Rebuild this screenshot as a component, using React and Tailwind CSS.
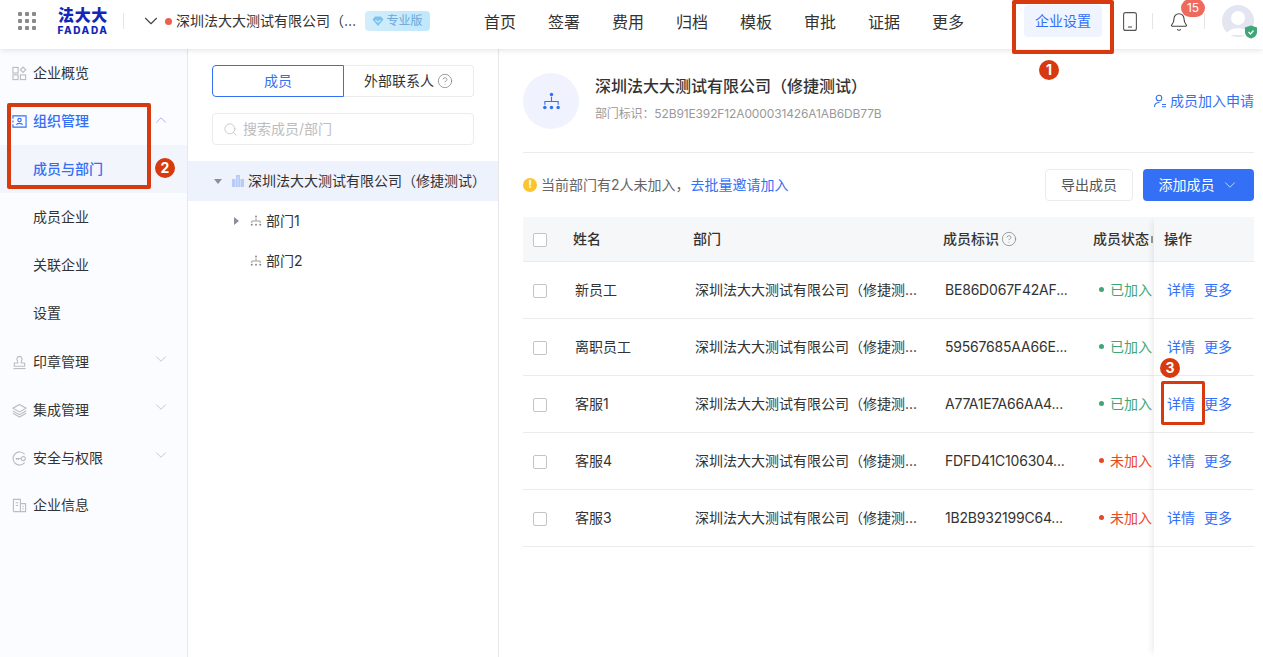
import React from 'react';
import { ChevronDown, ChevronUp, Search, CircleHelp, Bell } from 'lucide-react';

const navItems = ['首页', '签署', '费用', '归档', '模板', '审批', '证据', '更多'];

const members = [
	{ name: '新员工', id: 'BE86D067F42AF...', joined: true },
	{ name: '离职员工', id: '59567685AA66E...', joined: true },
	{ name: '客服1', id: 'A77A1E7A66AA4...', joined: true },
	{ name: '客服4', id: 'FDFD41C106304...', joined: false },
	{ name: '客服3', id: '1B2B932199C64...', joined: false },
];

const OrgIcon = ({ className, color = '#8c8c8c', r = 1, sw = 0.8 }) => (
	<svg viewBox="0 0 12 12" className={className} fill="none">
		<circle cx="6" cy="1.600" r={r} fill={color} />
		<path d="M6 3v3M1.800 8V6h8.400v2" stroke={color} strokeWidth={sw} />
		<circle cx="1.800" cy="9.800" r={r} fill={color} />
		<circle cx="6" cy="9.800" r={r} fill={color} />
		<circle cx="10.200" cy="9.800" r={r} fill={color} />
	</svg>
);

const SideItem = ({ icon, label, open, hasArrow, active, sub }) => (
	<div className={`h-12 flex items-center text-sm relative ${sub ? 'pl-[33px]' : 'pl-3'} ${active ? 'text-[#3370f6] font-medium' : 'text-[#333]'} ${sub && active ? 'bg-[#f3f5fd]' : ''}`}>
		{icon && <span className="w-[21px] h-4 flex items-center shrink-0">{icon}</span>}
		<span>{label}</span>
		{hasArrow && (open
			? <ChevronUp className="absolute left-[152px] top-[14px] w-[18px] h-[18px] text-[#7f9fe8]" strokeWidth={1} />
			: <ChevronDown className="absolute left-[152px] top-[12px] w-[18px] h-[18px] text-[#b5b5b5]" strokeWidth={1} />)}
	</div>
);

const gray = { stroke: '#bdbdbd', strokeWidth: 1.2, fill: 'none' };

const Sidebar = () => (
	<aside className="w-[188px] shrink-0 border-r border-[#e8e8e8] bg-[#fbfcff]">
		<SideItem label="企业概览" icon={
			<svg viewBox="0 0 16 16" className="w-[15px] h-[15px]">
				<rect x="1" y="1.500" width="5.500" height="6" {...gray} />
				<rect x="1" y="9.500" width="5.500" height="5" {...gray} />
				<rect x="9" y="9.500" width="5.500" height="5" {...gray} />
				<rect x="9.800" y="2" width="4" height="4" transform="rotate(45 11.800 4)" {...gray} />
			</svg>
		} />
		<SideItem label="组织管理" active hasArrow open icon={
			<svg viewBox="0 0 16 16" className="w-[15px] h-[15px]" fill="none" stroke="#3370f6" strokeWidth="1.200">
				<path d="M1 5V2h14v12H1v-3M1 7v2" />
				<circle cx="8" cy="6.500" r="1.800" />
				<path d="M4.800 11.500c.5-2 5.900-2 6.400 0" />
			</svg>
		} />
		<SideItem label="成员与部门" active sub />
		<SideItem label="成员企业" sub />
		<SideItem label="关联企业" sub />
		<SideItem label="设置" sub />
		<div className="h-px" />
		<SideItem label="印章管理" hasArrow icon={
			<svg viewBox="0 0 16 16" className="w-[15px] h-[15px]">
				<path d="M8 1.500a2.800 2.800 0 0 1 2.200 4.500L9.800 8.500H13.500V12H2.500V8.500H6.200L5.800 6A2.800 2.800 0 0 1 8 1.500z" {...gray} />
				<path d="M1.500 14.500h13" {...gray} />
			</svg>
		} />
		<SideItem label="集成管理" hasArrow icon={
			<svg viewBox="0 0 16 16" className="w-[15px] h-[15px]">
				<path d="M8 1.500 15 5.500 8 9.500 1 5.500z" {...gray} />
				<path d="M1 8.500l7 4 7-4M1 11l7 4 7-4" {...gray} />
			</svg>
		} />
		<SideItem label="安全与权限" hasArrow icon={
			<svg viewBox="0 0 16 16" className="w-[15px] h-[15px]">
				<path d="M13.500 3.500A7 7 0 1 0 13.500 12.500" {...gray} />
				<circle cx="12" cy="8" r="2.200" {...gray} />
				<path d="M4 8h5.500M5 8v1.500M7 8v1.500" {...gray} />
			</svg>
		} />
		<div className="-mt-px">
			<SideItem label="企业信息" icon={
				<svg viewBox="0 0 16 16" className="w-[15px] h-[15px]">
					<path d="M1.500 14.500V1.500h7.500v13M9 6h5.500v8.500H1.500" {...gray} />
					<path d="M4 5h2.500M4 8h2.500M11 9h1.500M11 11.500h1.500" {...gray} />
				</svg>
			} />
		</div>
	</aside>
);

const Header = () => (
	<header className="h-[49px] shrink-0 flex items-center pb-[7px] bg-white shadow-[0_1px_6px_rgba(0,0,0,0.12)] relative z-10 text-[#333]">
		<div className="ml-[18px] w-[18px] grid grid-cols-3 gap-[3px]">
			{Array.from({ length: 9 }).map((_, i) => <span key={i} className="w-1 h-1 bg-[#8a8a8a] rounded-[1px]" />)}
		</div>
		<div className="ml-[22px] w-[50px] flex flex-col items-center text-[#1226b8] leading-none">
			<span className="text-[16px] font-black leading-[15px] tracking-[0.6px]">法大大</span>
			<span className="text-[10px] font-extrabold leading-[9px] tracking-[1.6px] mt-[3px] whitespace-nowrap">FADADA</span>
		</div>
		<div className="ml-[15px] w-px h-4 bg-[#e5e5e5]" />
		<ChevronDown className="ml-[16px] w-[22px] h-[22px] text-[#444]" strokeWidth={1.200} />
		<span className="ml-[3px] w-[7px] h-[7px] rounded-full bg-[#ee5f50]" />
		<span className="ml-[4px] text-sm w-[182px] whitespace-nowrap">深圳法大大测试有限公司（…</span>
		<span className="ml-[7px] w-[65px] h-5 rounded bg-gradient-to-r from-[#d3edfb] to-[#bfe8fb] text-xs text-[#6ba6d6] flex items-center justify-center gap-[2px]">
			<svg viewBox="0 0 12 12" className="w-3 h-3"><path d="M3 1.500h6L11.500 4.500 6 11 .5 4.500z" fill="#7cc2ee" /><path d="M3.500 5 6 7.500 8.500 5" stroke="#fff" fill="none" /></svg>
			专业版
		</span>
		<nav className="ml-[54px] flex gap-8 text-base mt-[1px]">
			{navItems.map((n) => <span key={n}>{n}</span>)}
		</nav>
		<div className="ml-auto flex items-center pr-[9px]">
			<span className="w-[78px] h-8 rounded bg-[#f0f4ff] text-sm text-[#3370f6] flex items-center justify-center">企业设置</span>
			<svg viewBox="0 0 14 19" className="ml-[21px] w-[14px] h-[19px]" fill="none" stroke="#555" strokeWidth="1.100">
				<rect x="0.600" y="0.600" width="12.800" height="17.800" rx="2" />
				<path d="M5 15h4" />
			</svg>
			<div className="ml-[15px] w-px h-4 bg-[#e5e5e5]" />
			<div className="relative ml-[16px] mt-[2px]">
				<Bell className="w-[20px] h-[20px] text-[#444]" strokeWidth={1.300} />
				<span className="absolute -top-[13px] left-[12px] w-6 h-[18px] rounded-full bg-[#ee6a5f] text-white text-xs flex items-center justify-center">15</span>
			</div>
			<div className="ml-[15px] w-px h-4 bg-[#e5e5e5]" />
			<div className="relative ml-[17px] w-8 h-8 rounded-full bg-[#e3e6f0]">
				<svg viewBox="0 0 32 32" className="w-8 h-8">
					<circle cx="16" cy="13" r="7" fill="#fff" />
					<path d="M4 30c2-9 22-9 24 0z" fill="#fff" />
				</svg>
				<svg viewBox="0 0 14 14" className="absolute -right-1 -bottom-[2px] w-[14px] h-[14px]">
					<path d="M7 .5 13 2.500V7c0 3.500-2.500 5.500-6 6.500C3.500 12.500 1 10.500 1 7V2.500z" fill="#3fa678" />
					<path d="M4.500 7 6.500 9 9.500 5.500" stroke="#fff" fill="none" strokeWidth="1.200" />
				</svg>
			</div>
		</div>
	</header>
);

const DeptPanel = () => (
	<section className="w-[311px] shrink-0 border-r border-[#e8e8e8] pt-4 text-[#333]">
		<div className="mx-6 flex h-8 text-sm">
			<div className="w-[132px] border border-[#3370f6] rounded-l-sm text-[#3370f6] flex items-center justify-center">成员</div>
			<div className="flex-1 border border-l-0 border-[#ebebeb] rounded-r-sm flex items-center justify-center gap-[3px]">
				外部联系人
				<CircleHelp className="w-4 h-4 text-[#888]" strokeWidth={1.200} />
			</div>
		</div>
		<div className="mx-6 mt-4 h-8 border border-[#ebebeb] rounded-sm flex items-center pl-[10px] gap-[5px] text-sm text-[#bdbdbd]">
			<Search className="w-[15px] h-[15px]" strokeWidth={1.200} />
			搜索成员/部门
		</div>
		<div className="mt-4 h-10 bg-[#eef2fd] flex items-center text-sm">
			<span className="ml-[26px] border-x-[4px] border-x-transparent border-t-[5px] border-t-[#8a8f99]" />
			<svg viewBox="0 0 12 12" className="ml-[10px] w-3 h-3" fill="#b6cbf5">
				<path d="M0 12V4h3.500v8zM4 12V0h4v12zM8.500 12V4H12v8z" />
				<path d="M6 2v9" stroke="#eef2fd" strokeWidth="0.500" />
			</svg>
			<span className="ml-[4px] whitespace-nowrap">深圳法大大测试有限公司（修捷测试）</span>
		</div>
		<div className="h-10 flex items-center text-sm">
			<span className="ml-[46px] border-y-[4px] border-y-transparent border-l-[5px] border-l-[#8a8f99]" />
			<OrgIcon className="ml-[11px] w-3 h-3" />
			<span className="ml-[4px]">部门1</span>
		</div>
		<div className="h-10 flex items-center text-sm">
			<OrgIcon className="ml-[62px] w-3 h-3" />
			<span className="ml-[4px]">部门2</span>
		</div>
	</section>
);

const Checkbox = () => <span className="w-[14px] h-[14px] mt-[2px] border border-[#c4c4c4] rounded-[2px] bg-white shrink-0" />;

const Table = () => (
	<div className="flex-1 flex mt-4 min-h-0 text-sm text-[#333]">
		<div className="flex-1 min-w-0 overflow-hidden">
			<div className="h-[45px] bg-[#f6f7f9] border-b border-[#ebebeb] flex items-center pl-[10px] font-medium whitespace-nowrap">
				<Checkbox />
				<span className="ml-[26px] w-[120px] shrink-0">姓名</span>
				<span className="w-[250px] shrink-0">部门</span>
				<span className="w-[150px] shrink-0 flex items-center gap-[2px]">
					成员标识
					<CircleHelp className="w-4 h-4 text-[#888]" strokeWidth={1.200} />
				</span>
				<span className="shrink-0">成员状态</span>
				<span className="ml-[2px] w-[2px] h-[7px] bg-[#999] shrink-0" />
			</div>
			{members.map((m) => (
				<div key={m.name} className="h-[57px] border-b border-[#ebebeb] flex items-center pl-[10px] whitespace-nowrap">
					<Checkbox />
					<span className="ml-[28px] w-[120px] shrink-0 -mt-[1px]">{m.name}</span>
					<span className="w-[250px] shrink-0 -mt-[1px]">深圳法大大测试有限公司（修捷测...</span>
					<span className="w-[154px] shrink-0 -mt-[1px] tracking-[-0.2px]">{m.id}</span>
					<span className={`flex items-center shrink-0 -mt-[1px] ${m.joined ? 'text-[#3fa678]' : 'text-[#e8481f]'}`}>
						<span className={`w-[5px] h-[5px] rounded-full mr-[6px] ${m.joined ? 'bg-[#3fa678]' : 'bg-[#e8481f]'}`} />
						{m.joined ? '已加入' : '未加入'}
					</span>
				</div>
			))}
		</div>
		<div className="w-[100px] shrink-0 bg-white shadow-[-6px_0_6px_-4px_rgba(0,0,0,0.08)] relative">
			<div className="h-[45px] bg-[#f6f7f9] border-b border-[#ebebeb] flex items-center pl-[10px] font-medium">操作</div>
			{members.map((m) => (
				<div key={m.name} className="h-[57px] border-b border-[#ebebeb] flex items-center pl-[14px] gap-[9px] text-[#3370f6] -ml-px">
					<span className="-mt-[1px]">详情</span>
					<span className="-mt-[1px]">更多</span>
				</div>
			))}
		</div>
	</div>
);

const MainPanel = () => (
	<main className="flex-1 min-w-0 flex flex-col pl-6 pr-[9px] pt-6 text-[#333]">
		<div className="h-[80px] shrink-0 border-b border-[#ebebeb] flex items-start">
			<div className="w-14 h-14 rounded-full bg-[#f0f3fd] flex items-center justify-center">
				<OrgIcon className="w-[19px] h-[19px]" color="#3370f6" r={1.100} sw={0.700} />
			</div>
			<div className="ml-4 mt-[1px]">
				<div className="text-base font-medium leading-6">深圳法大大测试有限公司（修捷测试）</div>
				<div className="text-xs text-[#999] mt-[6px] leading-5 tracking-[-0.13px]">部门标识：52B91E392F12A000031426A1AB6DB77B</div>
			</div>
			<div className="ml-auto mt-[18px] flex items-center gap-[3px] text-sm text-[#3370f6]">
				<svg viewBox="0 0 14 14" className="w-[14px] h-[14px]" fill="none" stroke="#3370f6" strokeWidth="1.100">
					<circle cx="6" cy="4" r="2.800" />
					<path d="M1.500 13c0-3 2-4.500 5-4.500M9 10.500h4M9 12.800h4" />
				</svg>
				成员加入申请
			</div>
		</div>
		<div className="mt-4 h-8 shrink-0 flex items-center text-sm">
			<span className="w-[14px] h-[14px] rounded-full bg-[#fcc42e] text-white text-[11px] font-bold flex items-center justify-center">!</span>
			<span className="ml-1 text-[#666]">当前部门有2人未加入，</span>
			<span className="text-[#3370f6] ml-[1px]">去批量邀请加入</span>
			<span className="ml-auto w-[88px] h-8 border border-[#ebebeb] rounded-sm flex items-center justify-center text-[#555]">导出成员</span>
			<span className="ml-[10px] w-[111px] h-8 bg-[#3370f6] rounded-sm text-white flex items-center justify-center gap-[6px]">
				添加成员
				<ChevronDown className="w-[18px] h-[18px] text-[#cfdcfb]" strokeWidth={1.200} />
			</span>
		</div>
		<Table />
	</main>
);

const Marker = ({ n, className }) => (
	<span className={`absolute z-20 ${className} w-5 h-5 rounded-full bg-[#d63a0e] text-white text-sm font-bold flex items-center justify-center`}>{n}</span>
);

const Annotations = () => (
	<>
		<div className="absolute z-20 left-[1012px] top-0 w-[102px] h-[54px] border-[4px] border-[#d63a0e] rounded-[2px]" />
		<div className="absolute z-20 left-[7px] top-[103px] w-[144px] h-[86px] border-[4px] border-[#d63a0e] rounded-[2px]" />
		<div className="absolute z-20 left-[1161px] top-[381px] w-[44px] h-[44px] border-[3.500px] border-[#d63a0e] rounded-[2px]" />
		<Marker n="1" className="left-[1039px] top-[60px]" />
		<Marker n="2" className="left-[155px] top-[158px]" />
		<Marker n="3" className="left-[1160px] top-[358px]" />
	</>
);

export default function App() {
	return (
		<div className="relative w-[1263px] h-[657px] overflow-hidden bg-white flex flex-col" style={{ fontFamily: 'Inter, "Noto Sans CJK SC", sans-serif' }}>
			<Header />
			<div className="flex-1 flex min-h-0">
				<Sidebar />
				<DeptPanel />
				<MainPanel />
			</div>
			<Annotations />
		</div>
	);
}
